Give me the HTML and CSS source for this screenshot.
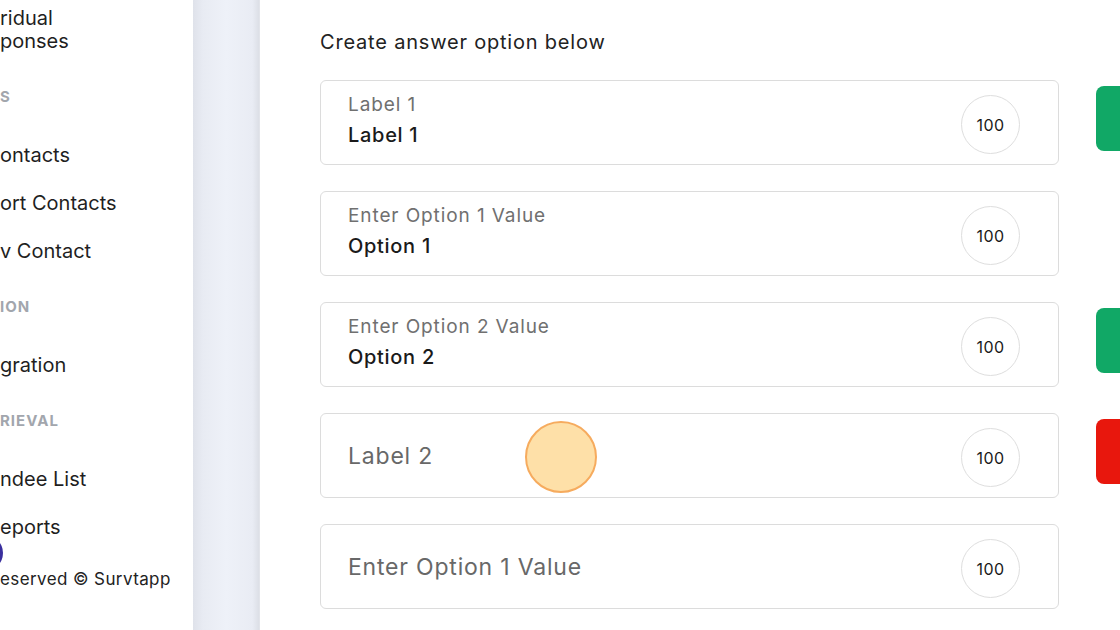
FILE: index.html
```html
<!DOCTYPE html>
<html lang="en">
<head>
<meta charset="utf-8">
<title>Create answer options</title>
<link rel="stylesheet" href="styles.css">
</head>
<body>
<div class="page">
  <aside class="sidebar">
    <div class="nav-item nav-item--multi"><span>ridual</span><span>ponses</span></div>
    <div class="nav-heading">S</div>
    <div class="nav-item">ontacts</div>
    <div class="nav-item">ort Contacts</div>
    <div class="nav-item">v Contact</div>
    <div class="nav-heading">ION</div>
    <div class="nav-item">gration</div>
    <div class="nav-heading">RIEVAL</div>
    <div class="nav-item">ndee List</div>
    <div class="nav-item">eports</div>
    <div class="footer">eserved © Survtapp</div>
    <span class="chat-bubble"></span>
  </aside>
  <div class="gutter"></div>
  <main class="main">
    <h2 class="title">Create answer option below</h2>
    <div class="rows">
      <div class="row">
        <div class="card">
          <div class="field">
            <div class="field-label">Label 1</div>
            <div class="field-value">Label 1</div>
          </div>
          <div class="score">100</div>
        </div>
        <div class="action action--green"></div>
      </div>
      <div class="row">
        <div class="card">
          <div class="field">
            <div class="field-label">Enter Option 1 Value</div>
            <div class="field-value">Option 1</div>
          </div>
          <div class="score">100</div>
        </div>
      </div>
      <div class="row">
        <div class="card">
          <div class="field">
            <div class="field-label">Enter Option 2 Value</div>
            <div class="field-value">Option 2</div>
          </div>
          <div class="score">100</div>
        </div>
        <div class="action action--green"></div>
      </div>
      <div class="row">
        <div class="card">
          <div class="field field--empty">
            <div class="placeholder">Label 2</div>
          </div>
          <div class="score">100</div>
          <span class="click-marker"></span>
        </div>
        <div class="action action--red"></div>
      </div>
      <div class="row">
        <div class="card">
          <div class="field field--empty">
            <div class="placeholder">Enter Option 1 Value</div>
          </div>
          <div class="score">100</div>
        </div>
      </div>
    </div>
  </main>
</div>
</body>
</html>
```

FILE: styles.css
```css
* { box-sizing: border-box; }
html, body {
  margin: 0;
  padding: 0;
  width: 1120px;
  height: 630px;
  overflow: hidden;
  background: #ffffff;
  font-family: "Inter", "Noto Sans", sans-serif;
  color: #222222;
}
.page {
  display: flex;
  height: 630px;
}
.sidebar {
  position: relative;
  width: 193px;
  flex: none;
  background: #ffffff;
  overflow: hidden;
  display: flex;
  flex-direction: column;
}
.nav-item {
  font-size: 20px;
  line-height: 24px;
  height: 48px;
  padding-top: 12px;
  flex: none;
  white-space: nowrap;
  color: #1f1f1f;
}
.nav-item--multi {
  display: flex;
  flex-direction: column;
  line-height: 23px;
  height: 65px;
  padding-top: 7px;
}
.nav-heading {
  font-size: 15px;
  font-weight: 700;
  letter-spacing: 1px;
  color: #a2a6ad;
  line-height: 20px;
  height: 66px;
  flex: none;
  padding-top: 22px;
  white-space: nowrap;
}
.footer {
  font-size: 17px;
  line-height: 20px;
  letter-spacing: 0.4px;
  white-space: nowrap;
  color: #222;
  margin-top: 18px;
}
.chat-bubble {
  position: absolute;
  left: -33px;
  top: 535px;
  width: 36px;
  height: 36px;
  border-radius: 50%;
  background: #3a2f9e;
}
.gutter {
  width: 67px;
  flex: none;
  background: linear-gradient(90deg, #dfe2ea 0%, #e8ebf3 15%, #eef1f8 50%, #e9ecf4 90%, #dcdfe6 100%);
  border-right: 1px solid #e2e4ea;
}
.main {
  flex: 1;
  padding: 30px 0 0 60px;
}
.title {
  margin: 0 0 26px;
  font-size: 20px;
  line-height: 24px;
  font-weight: 400;
  letter-spacing: 0.8px;
  color: #222;
}
.rows {
  display: flex;
  flex-direction: column;
  gap: 26px;
}
.row {
  display: flex;
  align-items: flex-start;
  gap: 37px;
}
.card {
  position: relative;
  width: 739px;
  height: 85px;
  flex: none;
  border: 1px solid #dcdcdc;
  border-radius: 6px;
  display: flex;
  align-items: center;
  justify-content: space-between;
  padding: 0 38px 0 27px;
}
.field {
  padding-bottom: 5px;
}
.field--empty {
  padding-bottom: 0;
}
.field-label {
  font-size: 19px;
  line-height: 22px;
  letter-spacing: 0.9px;
  color: #707070;
}
.field-value {
  font-size: 20px;
  line-height: 24px;
  font-weight: 500;
  letter-spacing: 0.7px;
  color: #1a1a1a;
  margin-top: 7px;
}
.placeholder {
  font-size: 23px;
  line-height: 26px;
  letter-spacing: 0.8px;
  color: #686868;
}
.score {
  width: 59px;
  height: 59px;
  border-radius: 50%;
  border: 1px solid #dedede;
  display: flex;
  align-items: center;
  justify-content: center;
  font-size: 16px;
  letter-spacing: 0.5px;
  color: #1a1a1a;
  margin-top: 4px;
}
.action {
  width: 60px;
  height: 65px;
  margin-top: 6px;
  border-radius: 8px;
  flex: none;
}
.action--green { background: #11a866; }
.action--red { background: #e8170d; }
.click-marker {
  position: absolute;
  left: 204px;
  top: 7px;
  width: 72px;
  height: 72px;
  border-radius: 50%;
  background: #fee0a8;
  border: 2px solid #f6ab5e;
}
```
